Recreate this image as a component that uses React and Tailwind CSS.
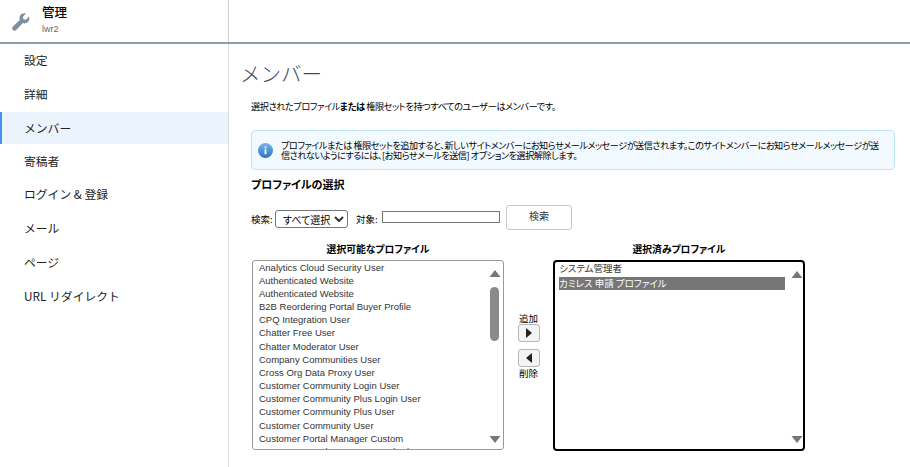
import React from "react";

const jp = "font-['Noto_Sans_CJK_JP','Liberation_Sans',sans-serif]";
const palt = "[font-feature-settings:'palt']";
const nav = ["設定", "詳細", "メンバー", "寄稿者", "ログイン & 登録", "メール", "ページ", "URL リダイレクト"];
const avail = ["Analytics Cloud Security User","Authenticated Website","Authenticated Website","B2B Reordering Portal Buyer Profile","CPQ Integration User","Chatter Free User","Chatter Moderator User","Company Communities User","Cross Org Data Proxy User","Customer Community Login User","Customer Community Plus Login User","Customer Community Plus User","Customer Community User","Customer Portal Manager Custom","Customer Portal Manager Standard"];

function Arrows({ thumb }) {
  return (
    <div className="relative w-[12px] shrink-0 h-full">
      <svg className="absolute left-0 top-[9px]" width="12" height="7" viewBox="0 0 12 7"><path d="M6 0 L11.5 7 L0.5 7 Z" fill="#777" /></svg>
      {thumb && <div className="absolute left-[1px] top-[26px] w-[9px] h-[54px] rounded-[5px] bg-[#8a8a8a]" />}
      <svg className="absolute left-0 bottom-[6px]" width="12" height="7" viewBox="0 0 12 7"><path d="M0.5 0 L11.5 0 L6 7 Z" fill="#777" /></svg>
    </div>
  );
}

function MoveButton({ dir }) {
  return (
    <div className="w-[22px] h-[18px] border border-[#b5b5b5] rounded-[3px] bg-[#f4f4f4] flex items-center justify-center">
      <svg width="6" height="10" viewBox="0 0 6 10">
        <path d={dir === "r" ? "M0 0 L6 5 L0 10 Z" : "M6 0 L0 5 L6 10 Z"} fill="#222" />
      </svg>
    </div>
  );
}

export default function App() {
  return (
    <div className={`${jp} w-[910px] h-[467px] overflow-hidden bg-white text-black flex flex-col`}>
      <header className="flex h-[44px] shrink-0 border-b-2 border-[#8a9dac]">
        <div className="w-[229px] shrink-0 border-r border-[#c9cfd4] flex items-center pl-[12px] gap-[12px]">
          <svg width="18" height="18" viewBox="0 0 18 18" className="mt-[1px]">
            <path d="M17 3.6 L13.9 6.7 L11.4 6.2 L10.9 3.7 L14 0.6 C11.8 -0.1 9.4 0.6 8.2 2.4 C7.3 3.8 7.2 5.4 7.8 6.9 L0.9 13.6 C-0.2 14.7 0 16.2 0.9 17 C1.8 17.9 3.2 18 4.2 17 L10.9 10.1 C12.5 10.7 14.3 10.4 15.7 9.3 C17.3 8 17.8 5.6 17 3.6 Z" fill="#7d8fa0" />
          </svg>
          <div className="flex flex-col mt-[-3px]">
            <span className="text-[12.5px] leading-[18px] font-medium">管理</span>
            <span className="text-[9px] leading-[13px] text-[#666] font-['Liberation_Sans',sans-serif] mt-[2px]">lwr2</span>
          </div>
        </div>
        <div className="flex-1" />
      </header>
      <div className="flex flex-1 min-h-0">
        <nav className="w-[229px] shrink-0 border-r border-[#d8dde6] flex flex-col">
          <div className="h-[34px] mt-[-1px] flex items-center pl-[24px] text-[11.8px] text-[#222]">{nav[0]}</div>
          <div className="h-[34px] flex items-center pl-[24px] text-[11.8px] text-[#222]">{nav[1]}</div>
          <div className="h-[32px] mt-[1px] flex items-center pl-[22px] border-l-2 border-[#4a90e8] bg-[#ebf3fc] text-[11.8px] text-[#222]">{nav[2]}</div>
          <div className="h-[33px] flex items-center pl-[24px] text-[11.8px] text-[#222]">{nav[3]}</div>
          {nav.slice(4).map((n) => (
            <div key={n} className="h-[34px] flex items-center pl-[24px] text-[11.8px] text-[#222]">{n}</div>
          ))}
        </nav>
        <main className="flex-1 min-w-0 pl-[13px] pr-[15px] flex flex-col">
          <h1 className="text-[20.5px] leading-[28px] mt-[15px] ml-[-2px] text-[#3c4a5a] font-light">メンバー</h1>
          <p className={`${palt} text-[9.2px] tracking-[-0.45px] whitespace-nowrap leading-[13px] mt-[13px] ml-[9px]`}>選択されたプロファイル<b>または</b> 権限セットを持つすべてのユーザーはメンバーです。</p>
          <div className="ml-[9px] mt-[17px] h-[40px] w-[644px] border border-[#bfe3fb] rounded-[4px] bg-[#f3faff] flex items-center pl-[6px] pr-[4px]">
            <svg width="15" height="15" viewBox="0 0 15 15" className="shrink-0">
              <defs><linearGradient id="g" x1="0" y1="0" x2="0" y2="1"><stop offset="0" stopColor="#7db4e6" /><stop offset="1" stopColor="#2a72c0" /></linearGradient></defs>
              <circle cx="7.5" cy="7.5" r="7.5" fill="url(#g)" />
              <rect x="6.6" y="6.2" width="1.8" height="5" fill="#fff" />
              <rect x="6.6" y="3.5" width="1.8" height="1.7" fill="#fff" />
            </svg>
            <p className={`${palt} ml-[8px] text-[9.1px] tracking-[-0.44px] leading-[10px] whitespace-nowrap`}>プロファイルまたは 権限セットを追加すると、新しいサイトメンバーにお知らせメールメッセージが送信されます。このサイトメンバーにお知らせメールメッセージが送<br />信されないようにするには、[お知らせメールを送信] オプションを選択解除します。</p>
          </div>
          <h2 className={`${palt} ml-[9px] mt-[6px] text-[11px] leading-[16px] font-bold`}>プロファイルの選択</h2>
          <div className={`${palt} ml-[9px] mt-[17px] flex items-start text-[9.5px] h-[26px]`}>
            <span className="mt-[3px] w-[24px]">検索:</span>
            <div className="mt-[1px] w-[73px] h-[18px] border border-[#767676] rounded-[3px] flex items-center justify-between pl-[7px] pr-[3px] text-[10px]">
              <span>すべて選択</span>
              <svg width="10" height="6" viewBox="0 0 10 6"><path d="M1 1 L5 5 L9 1" stroke="#333" strokeWidth="2" fill="none" /></svg>
            </div>
            <span className="ml-[8px] mt-[3px] w-[26px]">対象:</span>
            <div className="mt-[2px] w-[118px] h-[12px] border border-[#767676]" />
            <div className="ml-[6px] mt-[-4px] w-[66px] h-[25px] border border-[#c8c8c8] rounded-[3px] flex items-center justify-center text-[10px] text-[#333] pb-[4px]">検索</div>
          </div>
          <div className="ml-[9px] mt-[7px] flex items-stretch">
            <div className="w-[253px] pl-[1px]">
              <div className={`${palt} text-center text-[9.8px] leading-[15px] font-bold mb-[3px]`}>選択可能なプロファイル</div>
              <div className="h-[190px] border border-[#999] rounded-[3px] overflow-hidden flex pl-[6px] pr-[2px] bg-white">
                <div className="flex-1 min-w-0 font-['Liberation_Sans',sans-serif] text-[9.5px] text-[#333]">
                  {avail.map((a, i) => <div key={i} className={`${i === 5 || i === 11 ? "h-[14px]" : "h-[13px]"} leading-[13px] whitespace-nowrap`}>{a}</div>)}
                </div>
                <Arrows thumb />
              </div>
            </div>
            <div className="w-[49px] flex flex-col items-center justify-center text-[9.5px] pb-[2px]">
              <span className="leading-[12px]">追加</span>
              <MoveButton dir="r" />
              <div className="h-[7px]" />
              <MoveButton dir="l" />
              <span className="leading-[12px]">削除</span>
            </div>
            <div className="w-[252px]">
              <div className={`${palt} text-center text-[9.8px] leading-[15px] font-bold mb-[3px]`}>選択済みプロファイル</div>
              <div className={`${palt} h-[191px] border-2 border-black rounded-[4px] overflow-hidden flex pl-[4px] bg-white text-[9.5px]`}>
                <div className="flex-1 min-w-0 mr-[6px] text-[#333]">
                  <div className="h-[15px] leading-[13px]">システム管理者</div>
                  <div className="h-[13px] leading-[13px] bg-[#767676] text-white">カミレス 申請 プロファイル</div>
                </div>
                <Arrows />
              </div>
            </div>
          </div>
        </main>
      </div>
    </div>
  );
}
